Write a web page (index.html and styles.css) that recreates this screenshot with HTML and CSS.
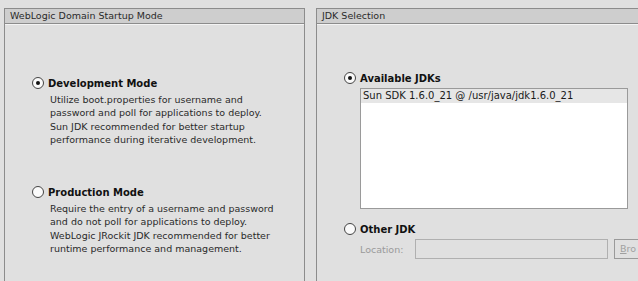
FILE: index.html
```html
<!DOCTYPE html>
<html lang="en">
<head>
    <meta charset="UTF-8">
    <title>Domain Mode and JDK</title>
    <link rel="stylesheet" href="styles.css">
</head>
<body>
    <div class="panels">
        <div class="panel panel-mode">
            <div class="panel-title">WebLogic Domain Startup Mode</div>
            <div class="panel-body">
                <div class="option option-dev">
                    <div class="radio-row">
                        <span class="radio checked"></span>
                        <span class="radio-label">Development Mode</span>
                    </div>
                    <p class="desc">Utilize boot.properties for username and<br>password and poll for applications to deploy.<br>Sun JDK recommended for better startup<br>performance during iterative development.</p>
                </div>
                <div class="option option-prod">
                    <div class="radio-row">
                        <span class="radio"></span>
                        <span class="radio-label">Production Mode</span>
                    </div>
                    <p class="desc">Require the entry of a username and password<br>and do not poll for applications to deploy.<br>WebLogic JRockit JDK recommended for better<br>runtime performance and management.</p>
                </div>
            </div>
        </div>
        <div class="panel panel-jdk">
            <div class="panel-title">JDK Selection</div>
            <div class="panel-body">
                <div class="radio-row">
                    <span class="radio checked"></span>
                    <span class="radio-label">Available JDKs</span>
                </div>
                <div class="jdk-list">
                    <div class="jdk-item selected">Sun SDK 1.6.0_21 @ /usr/java/jdk1.6.0_21</div>
                </div>
                <div class="radio-row other-row">
                    <span class="radio"></span>
                    <span class="radio-label">Other JDK</span>
                </div>
                <div class="location-row">
                    <span class="location-label">Location:</span>
                    <span class="location-field"></span>
                    <span class="browse-btn"><u>B</u>ro</span>
                </div>
            </div>
        </div>
    </div>
</body>
</html>
```

FILE: styles.css
```css
body {
    margin: 0;
    background-color: #e0e0e0;
    color: #1a1a1a;
    font-family: 'DejaVu Sans', sans-serif;
    font-size: 9.5px;
    overflow: hidden;
    width: 638px;
    height: 281px;
}
.panels {
    display: flex;
    flex-direction: row;
    gap: 11px;
    padding: 8px 0 0 4px;
    overflow: hidden;
}
.panel {
    border: 1px solid #8c8c8c;
    border-bottom: none;
    height: 273px;
    box-sizing: border-box;
    flex-shrink: 0;
    overflow: hidden;
}
.panel-mode {
    width: 301px;
}
.panel-jdk {
    width: 323px;
    border-right: none;
}
.panel-title {
    height: 14px;
    line-height: 14px;
    padding-left: 5px;
    background-color: #cecece;
    border-bottom: 1px solid #8c8c8c;
    box-shadow: 0 1px 0 #f4f4f4;
    color: #2a2a2a;
    font-size: 9.5px;
}
.panel-body {
    padding-left: 27px;
}
.radio-row {
    display: flex;
    align-items: center;
    gap: 4px;
    height: 14px;
}
.radio {
    width: 10px;
    height: 10px;
    border: 1px solid #444;
    border-radius: 50%;
    background-color: #fafafa;
    position: relative;
    flex-shrink: 0;
}
.radio.checked::after {
    content: '';
    position: absolute;
    left: 3px;
    top: 3px;
    width: 4px;
    height: 4px;
    border-radius: 50%;
    background-color: #111;
}
.radio-label {
    font-weight: bold;
    font-size: 10px;
    color: #111;
}
.desc {
    margin: 3px 0 0 18px;
    line-height: 13.3px;
    color: #2a2a2a;
}
.option-dev {
    padding-top: 52px;
}
.option-prod {
    padding-top: 39px;
}
.panel-jdk .panel-body {
    padding-top: 47px;
    padding-left: 27px;
}
.jdk-list {
    margin: 3px 0 0 16px;
    width: 268px;
    height: 121px;
    box-sizing: border-box;
    border: 1px solid #9a9a9a;
    background-color: #ffffff;
}
.jdk-item {
    height: 14px;
    line-height: 14px;
    padding-left: 2px;
    font-size: 10px;
}
.jdk-item.selected {
    background-color: #e6e6e6;
}
.other-row {
    margin-top: 13px;
}
.location-row {
    display: flex;
    align-items: center;
    margin: 3px 0 0 16px;
    height: 20px;
}
.location-row > span {
    flex-shrink: 0;
}
.location-label {
    color: #9a9a9a;
    width: 55px;
}
.location-field {
    width: 193px;
    height: 20px;
    box-sizing: border-box;
    border: 1px solid #b0b0b0;
}
.browse-btn {
    margin-left: 6px;
    height: 20px;
    width: 40px;
    box-sizing: border-box;
    border: 1px solid #9a9a9a;
    border-right: none;
    color: #a0a0a0;
    line-height: 18px;
    padding-left: 5px;
}
```
